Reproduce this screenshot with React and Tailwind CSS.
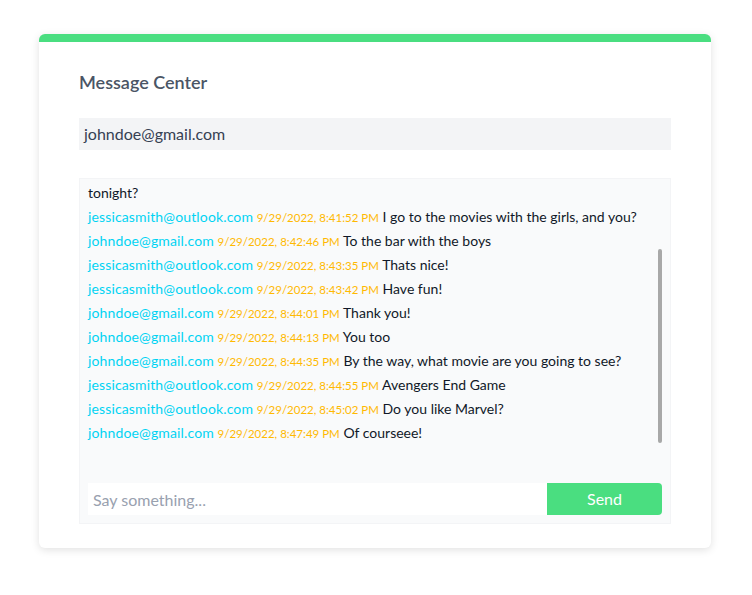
import React from 'react';

const messages = [
  { from: 'jessicasmith@outlook.com', at: '9/29/2022, 8:41:52 PM', text: 'I go to the movies with the girls, and you?' },
  { from: 'johndoe@gmail.com', at: '9/29/2022, 8:42:46 PM', text: 'To the bar with the boys' },
  { from: 'jessicasmith@outlook.com', at: '9/29/2022, 8:43:35 PM', text: 'Thats nice!' },
  { from: 'jessicasmith@outlook.com', at: '9/29/2022, 8:43:42 PM', text: 'Have fun!' },
  { from: 'johndoe@gmail.com', at: '9/29/2022, 8:44:01 PM', text: 'Thank you!' },
  { from: 'johndoe@gmail.com', at: '9/29/2022, 8:44:13 PM', text: 'You too' },
  { from: 'johndoe@gmail.com', at: '9/29/2022, 8:44:35 PM', text: 'By the way, what movie are you going to see?' },
  { from: 'jessicasmith@outlook.com', at: '9/29/2022, 8:44:55 PM', text: 'Avengers End Game' },
  { from: 'jessicasmith@outlook.com', at: '9/29/2022, 8:45:02 PM', text: 'Do you like Marvel?' },
  { from: 'johndoe@gmail.com', at: '9/29/2022, 8:47:49 PM', text: 'Of courseee!' },
];

export default function App() {
  return (
    <div className="min-h-screen bg-white pt-[34px] px-[39px]" style={{ fontFamily: 'Lato, sans-serif' }}>
      {/* Card */}
      <div className="w-[672px] bg-white rounded-md border-t-8 border-[#4ade80] shadow-[0_2px_8px_rgba(0,0,0,0.12)] px-10 pt-[26px] pb-6">
        <h2 className="text-lg font-semibold text-gray-600 leading-[28px]">Message Center</h2>

        {/* current user */}
        <div className="mt-[22px] h-8 bg-gray-100 px-[5px] flex items-center text-base text-gray-700">
          johndoe@gmail.com
        </div>

        {/* Chat box */}
        <div className="mt-7 bg-gray-50 border border-gray-100 h-[346px] flex flex-col">
          <div className="relative h-[266px] overflow-hidden px-2">
            <div className="absolute bottom-0 left-2 right-2 flex flex-col text-sm text-gray-900">
              <div className="h-6 leading-6">tonight?</div>
              {messages.map((m, i) => (
                <div key={i} className="h-6 leading-6 whitespace-nowrap">
                  <span className="text-cyan-400 tracking-[0.01em]">{m.from}</span>{' '}
                  <span className="text-[11.5px] text-amber-400">{m.at}</span>{' '}
                  <span>{m.text}</span>
                </div>
              ))}
            </div>
            {/* scrollbar thumb */}
            <div className="absolute right-2 top-[70px] w-1 h-[194px] rounded-full bg-[#a8a8a8]" />
          </div>

          <div className="mt-auto p-2 pt-0 flex">
            <input
              className="flex-1 h-8 bg-white px-[5px] text-base text-gray-700 placeholder-gray-400 outline-none"
              placeholder="Say something..."
            />
            <button className="w-[115px] h-8 bg-[#4ade80] text-white text-base rounded-r-sm">Send</button>
          </div>
        </div>
      </div>
    </div>
  );
}
